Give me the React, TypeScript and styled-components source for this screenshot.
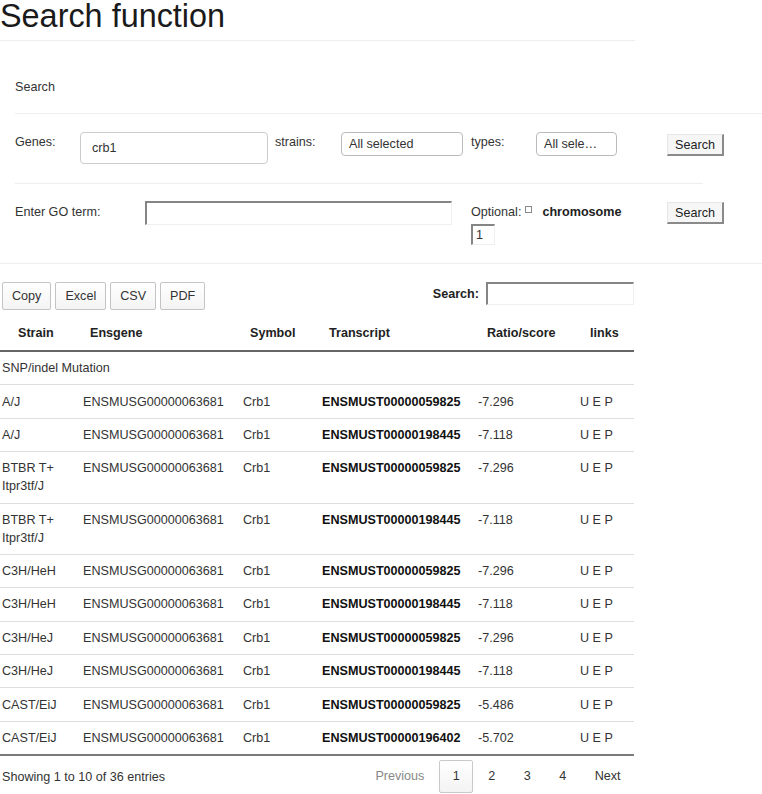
import React from 'react';
import styled, { createGlobalStyle } from 'styled-components';

const GlobalStyle = createGlobalStyle`
  body {
    margin: 0;
    font-family: "Liberation Sans", Arial, sans-serif;
    font-size: 12.6px;
    line-height: 18px;
    color: #333;
    background: #fff;
  }
  * { box-sizing: border-box; }
`;

const TitleBar = styled.div`
  width: 635px;
  height: 41px;
  padding-top: 1px;
  border-bottom: 1px solid #eee;
`;

const Title = styled.h1`
  margin: 0;
  font-size: 32.4px;
  line-height: 30px;
  font-weight: normal;
  color: #1a1a1a;
`;

const SearchPanel = styled.div`
  border-bottom: 1px solid #eee;
`;

const PanelHeading = styled.div`
  margin-left: 15px;
  padding: 37px 0 17px;
  border-bottom: 1px solid #eee;
`;

const FormRow = styled.div<{ $ruled?: boolean; $top: number; $bottom: number }>`
  display: flex;
  align-items: flex-start;
  margin-left: 15px;
  margin-right: ${(p) => (p.$ruled ? '59px' : '0')};
  padding: ${(p) => p.$top}px 0 ${(p) => p.$bottom}px;
  border-bottom: ${(p) => (p.$ruled ? '1px solid #eee' : 'none')};
`;

const Label = styled.div<{ $w: number }>`
  width: ${(p) => p.$w}px;
  flex: none;
  padding-top: 1px;
`;

const TextInput = styled.div`
  width: 188px;
  height: 32px;
  flex: none;
  margin-right: 7px;
  padding: 0 11px;
  display: flex;
  align-items: center;
  border: 1px solid #ccc;
  border-radius: 4px;
  background: #fff;
`;

const SelectBox = styled.div<{ $w: number; $after: number }>`
  width: ${(p) => p.$w}px;
  height: 24px;
  flex: none;
  margin-right: ${(p) => p.$after}px;
  padding: 0 7px;
  display: flex;
  align-items: center;
  border: 1px solid #bbb;
  border-radius: 4px;
  background: #fff;
  white-space: nowrap;
  overflow: hidden;
`;

const OldButton = styled.button<{ $top: number }>`
  flex: none;
  margin-top: ${(p) => p.$top}px;
  width: 57px;
  height: 22px;
  padding: 0;
  font: inherit;
  color: #222;
  background: #f6f6f6;
  border-style: solid;
  border-width: 1px 2px 2px 1px;
  border-color: #e6e6e6 #8a8a8a #8a8a8a #e6e6e6;
`;

const InsetInput = styled.div<{ $w: number; $h: number; $shift?: number }>`
  width: ${(p) => p.$w}px;
  height: ${(p) => p.$h}px;
  flex: none;
  margin-top: ${(p) => p.$shift ?? 0}px;
  padding-left: 3px;
  display: flex;
  align-items: center;
  background: #fff;
  border-style: solid;
  border-width: 2px 1px 1px 2px;
  border-color: #858585 #efefef #efefef #858585;
`;

const OptionalCol = styled.div`
  width: 196px;
  flex: none;
  margin-left: 19px;
  padding-top: 1px;
  display: flex;
  flex-direction: column;
  align-items: flex-start;
  gap: 3px;
`;

const OptionalLine = styled.div`
  display: flex;
  align-items: center;
`;

const TinyCheck = styled.span`
  display: inline-block;
  width: 7px;
  height: 7px;
  margin: -5px 10px 0 4px;
  border: 1px solid #8a8a8a;
  background: #fff;
`;

const Strong = styled.b`
  color: #222;
`;

const Results = styled.div`
  width: 634px;
`;

const Toolbar = styled.div`
  display: flex;
  justify-content: space-between;
  align-items: flex-start;
  padding: 18px 0 0 2px;
  margin-bottom: 5px;
`;

const ExportGroup = styled.div`
  display: flex;
  gap: 4px;
`;

const ExportButton = styled.button`
  height: 28px;
  padding: 0 9px;
  font: inherit;
  color: #333;
  background: linear-gradient(#fff, #f4f4f4);
  border: 1px solid #c4c4c4;
  border-radius: 2px;
`;

const FilterGroup = styled.div`
  display: flex;
  align-items: center;
  gap: 7px;
`;

const Table = styled.table`
  width: 634px;
  table-layout: fixed;
  border-collapse: separate;
  border-spacing: 0;
  border-bottom: 2px solid #7a7a7a;
`;

const Th = styled.th<{ $pad: number }>`
  padding: 9px 4px 8px ${(p) => p.$pad}px;
  text-align: left;
  font-weight: bold;
  color: #222;
  border-bottom: 2px solid #666;
`;

const Td = styled.td<{ $first?: boolean; $bold?: boolean }>`
  padding: 7.2px 4px 7.2px ${(p) => (p.$first ? 2 : 7)}px;
  vertical-align: top;
  font-weight: ${(p) => (p.$bold ? 'bold' : 'normal')};
  color: ${(p) => (p.$bold ? '#111' : '#333')};
  border-bottom: 1px solid #ddd;
  tr:last-child > & {
    border-bottom: none;
  }
`;

const Footer = styled.div`
  display: flex;
  justify-content: space-between;
  align-items: flex-start;
`;

const Info = styled.div`
  padding: 12px 0 0 2px;
`;

const Pager = styled.div`
  display: flex;
  padding-top: 4px;
`;

const PageButton = styled.span<{ $current?: boolean; $disabled?: boolean }>`
  margin-left: 1.5px;
  padding: 6.3px 12.4px;
  min-width: 34px;
  text-align: center;
  border: 1px solid ${(p) => (p.$current ? '#c9c9c9' : 'transparent')};
  border-radius: 2px;
  background: ${(p) => (p.$current ? 'linear-gradient(#fff, #f3f3f3)' : 'transparent')};
  color: ${(p) => (p.$disabled ? '#888' : '#333')};
`;

const GENE = 'ENSMUSG00000063681';

const rows: [string, string, string][] = [
  ['A/J', 'ENSMUST00000059825', '-7.296'],
  ['A/J', 'ENSMUST00000198445', '-7.118'],
  ['BTBR T+ Itpr3tf/J', 'ENSMUST00000059825', '-7.296'],
  ['BTBR T+ Itpr3tf/J', 'ENSMUST00000198445', '-7.118'],
  ['C3H/HeH', 'ENSMUST00000059825', '-7.296'],
  ['C3H/HeH', 'ENSMUST00000198445', '-7.118'],
  ['C3H/HeJ', 'ENSMUST00000059825', '-7.296'],
  ['C3H/HeJ', 'ENSMUST00000198445', '-7.118'],
  ['CAST/EiJ', 'ENSMUST00000059825', '-5.486'],
  ['CAST/EiJ', 'ENSMUST00000196402', '-5.702'],
];

const columns: [string, number, number][] = [
  ['Strain', 76, 18],
  ['Ensgene', 160, 14],
  ['Symbol', 79, 14],
  ['Transcript', 156, 14],
  ['Ratio/score', 102, 16],
  ['links', 61, 17],
];

export default function App() {
  return (
    <>
      <GlobalStyle />
      <TitleBar>
        <Title>Search function</Title>
      </TitleBar>

      <SearchPanel>
        <PanelHeading>Search</PanelHeading>

        <FormRow $ruled $top={18} $bottom={19}>
          <Label $w={65}>Genes:</Label>
          <TextInput>crb1</TextInput>
          <Label $w={66}>strains:</Label>
          <SelectBox $w={122} $after={8}>All selected</SelectBox>
          <Label $w={65}>types:</Label>
          <SelectBox $w={81} $after={50}>All sele…</SelectBox>
          <OldButton $top={2}>Search</OldButton>
        </FormRow>

        <FormRow $top={18} $bottom={18}>
          <Label $w={130}>Enter GO term:</Label>
          <InsetInput $w={307} $h={24} $shift={-1} />
          <OptionalCol>
            <OptionalLine>
              Optional:<TinyCheck />
              <Strong>chromosome</Strong>
            </OptionalLine>
            <InsetInput $w={24} $h={21}>1</InsetInput>
          </OptionalCol>
          <OldButton $top={0}>Search</OldButton>
        </FormRow>
      </SearchPanel>

      <Results>
        <Toolbar>
          <ExportGroup>
            <ExportButton>Copy</ExportButton>
            <ExportButton>Excel</ExportButton>
            <ExportButton>CSV</ExportButton>
            <ExportButton>PDF</ExportButton>
          </ExportGroup>
          <FilterGroup>
            <Strong>Search:</Strong>
            <InsetInput $w={148} $h={23} />
          </FilterGroup>
        </Toolbar>

        <Table>
          <colgroup>
            {columns.map(([name, w]) => (
              <col key={name} style={{ width: w }} />
            ))}
          </colgroup>
          <thead>
            <tr>
              {columns.map(([name, , pad]) => (
                <Th key={name} $pad={pad}>
                  {name}
                </Th>
              ))}
            </tr>
          </thead>
          <tbody>
            <tr>
              <Td $first colSpan={6}>
                SNP/indel Mutation
              </Td>
            </tr>
            {rows.map(([strain, transcript, score], i) => (
              <tr key={i}>
                <Td $first>{strain}</Td>
                <Td>{GENE}</Td>
                <Td>Crb1</Td>
                <Td $bold>{transcript}</Td>
                <Td>{score}</Td>
                <Td>U E P</Td>
              </tr>
            ))}
          </tbody>
        </Table>

        <Footer>
          <Info>Showing 1 to 10 of 36 entries</Info>
          <Pager>
            <PageButton $disabled>Previous</PageButton>
            <PageButton $current>1</PageButton>
            <PageButton>2</PageButton>
            <PageButton>3</PageButton>
            <PageButton>4</PageButton>
            <PageButton>Next</PageButton>
          </Pager>
        </Footer>
      </Results>
    </>
  );
}
